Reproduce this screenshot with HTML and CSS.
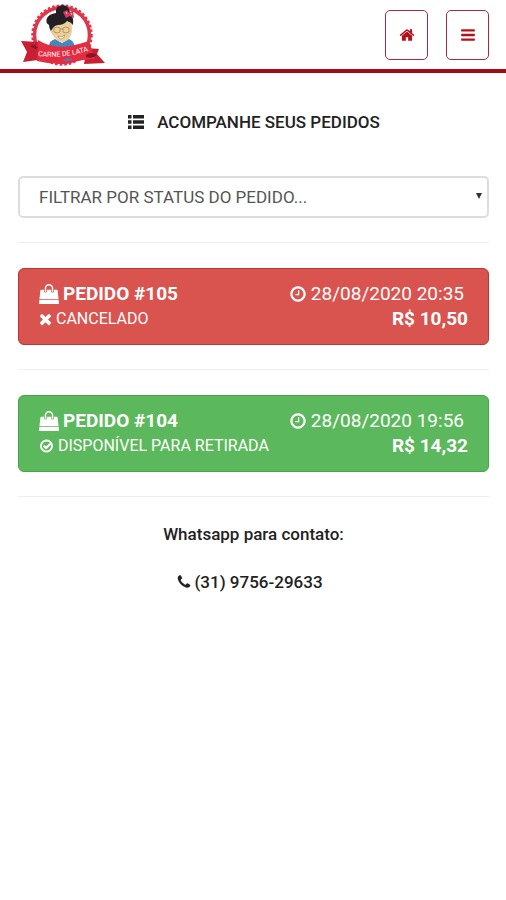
FILE: index.html
```html
<!DOCTYPE html>
<html lang="pt-br">
<head>
    <meta charset="UTF-8">
    <meta name="viewport" content="width=device-width, initial-scale=1.0">
    <title>Acompanhe seus pedidos</title>
    <link rel="stylesheet" href="styles.css">
</head>
<body>

<!-- Ícones -->
<svg class="sprite" width="0" height="0" aria-hidden="true">
    <symbol id="i-sacola" viewBox="0 0 1792 1792">
        <path d="M1757 1408l35 313q3 28-16 50-19 21-48 21H64q-29 0-48-21-19-22-16-50l35-313h1722zM1664 569l86 775H42l86-775q3-24 21-40.500t43-16.500h256v128q0 53 37.500 90.500t90.500 37.500 90.500-37.500 37.500-90.500V512h384v128q0 53 37.500 90.500t90.500 37.500 90.500-37.500 37.500-90.500V512h256q25 0 43 16.500t21 40.500zM1280 384v256q0 26-19 45t-45 19-45-19-19-45V384q0-106-75-181T896 128 715 203t-75 181v256q0 26-19 45t-45 19-45-19-19-45V384q0-159 112.500-271.500T896 0t271.500 112.500T1280 384z"/>
    </symbol>
    <symbol id="i-relogio" viewBox="0 0 1792 1792">
        <path d="M1024 544v448q0 14-9 23t-23 9H672q-14 0-23-9t-9-23v-64q0-14 9-23t23-9h224V544q0-14 9-23t23-9h64q14 0 23 9t9 23zm416 352q0-148-73-273t-198-198-273-73-273 73-198 198-73 273 73 273 198 198 273 73 273-73 198-198 73-273zm224 0q0 209-103 385.500T1281.500 1561 896 1664t-385.500-103T231 1281.500 128 896t103-385.500T510.500 231 896 128t385.500 103T1561 510.500 1664 896z"/>
    </symbol>
    <symbol id="i-check" viewBox="0 0 1792 1792">
        <path d="M1412 734q0 28-18 46l-91 90-408 408q-19 19-45 19-27 0-46-19L503 977q-18-18-18-46 0-27 18-45l91-91q19-19 45-19t45 19l166 165 363-362q19-19 45-19t45 19l91 90q18 18 18 46zM1440 896q0-148-73-273t-198-198-273-73-273 73-198 198-73 273 73 273 198 198 273 73 273-73 198-198 73-273zm224 0q0 209-103 385.500T1281.500 1561 896 1664t-385.500-103T231 1281.500 128 896t103-385.500T510.500 231 896 128t385.500 103T1561 510.500 1664 896z" fill-rule="evenodd"/>
    </symbol>
    <symbol id="i-fechar" viewBox="200 200 1392 1392">
        <path d="M1490 1322q0 40-28 68l-136 136q-28 28-68 28t-68-28l-294-294-294 294q-28 28-68 28t-68-28l-136-136q-28-28-28-68t28-68l294-294-294-294q-28-28-28-68t28-68l136-136q28-28 68-28t68 28l294 294 294-294q28-28 68-28t68 28l136 136q28 28 28 68t-28 68l-294 294 294 294q28 28 28 68z"/>
    </symbol>
    <symbol id="i-casa" viewBox="0 0 1792 1792">
        <path d="M1472 992v480q0 26-19 45t-45 19h-384v-384H768v384H384q-26 0-45-19t-19-45V992q0-1 .5-3t.5-3l575-474 575 474q1 2 1 6zm223-69l-62 74q-8 9-21 11h-3q-13 0-21-7L896 424l-692 577q-12 8-24 7-13-2-21-11l-62-74q-8-10-7-23.500t11-21.500l719-599q32-26 76-26t76 26l244 204V288q0-14 9-23t23-9h192q14 0 23 9t9 23v408l219 182q10 8 11 21.500t-7 23.500z"/>
    </symbol>
    <symbol id="i-menu" viewBox="0 0 1792 1792">
        <path d="M1664 1344v128q0 26-19 45t-45 19H192q-26 0-45-19t-19-45v-128q0-26 19-45t45-19h1408q26 0 45 19t19 45zm0-512v128q0 26-19 45t-45 19H192q-26 0-45-19t-19-45V832q0-26 19-45t45-19h1408q26 0 45 19t19 45zm0-512v128q0 26-19 45t-45 19H192q-26 0-45-19t-19-45V320q0-26 19-45t45-19h1408q26 0 45 19t19 45z"/>
    </symbol>
    <symbol id="i-lista" viewBox="0 0 18 16">
        <path d="M1 1h3.500v3.500H1zM6 1h11v3.500H6zM1 6.200h3.500v3.500H1zM6 6.200h11v3.500H6zM1 11.400h3.500v3.500H1zM6 11.400h11v3.500H6z"/>
    </symbol>
    <symbol id="i-telefone" viewBox="0 0 1792 1792">
        <path d="M1600 1240q0 27-10 70.500t-21 68.500q-21 50-122 106-94 51-186 51-27 0-53-3.500t-57.500-12.500-47-14.500T1048 1485t-49-18q-98-35-175-83-127-79-264-216T344 904q-48-77-83-175-3-9-18-49t-20.500-55.500-14.500-47-12.500-57.500-3.500-53q0-92 51-186 56-101 106-122 25-11 68.500-21t70.500-10q14 0 21 3 18 6 53 76 11 19 30 54t35 63.500 31 53.500q3 4 17.500 25t21.500 35.500 7 28.500q0 20-28.500 50t-62 55-62 53-28.500 46q0 9 5 22.500t8.500 20.500 14 24 11.500 19q76 137 174 235t235 174q2 1 19 11.500t24 14 20.500 8.500 22.500 5q18 0 46-28.500t53-62 55-62 50-28.500q14 0 28.500 7t35.500 21.500 25 17.500q25 15 53.500 31t63.500 35 54 30q70 35 76 53 3 7 3 21z"/>
    </symbol>
</svg>

<header class="topo">
    <a href="#" class="logo" aria-label="Carne de Lata">
        <svg width="86" height="64" viewBox="0 0 86 64">
            <circle cx="42" cy="31" r="27.500" fill="#fff" stroke="#e0354a" stroke-width="3.500"/>
            <circle cx="42" cy="31" r="29.500" fill="none" stroke="#e0354a" stroke-width="2.500" stroke-dasharray="2.600 2"/>
            <!-- roupa -->
            <path d="M29 42q0-5 6-7l7 4 7-4q5 2 6 8H29z" fill="#4387bd"/>
            <!-- rosto -->
            <path d="M31 17h20q2 8 0 14-3 7-9 7-6-1-10-8-4-4-1-13z" fill="#ecd09c"/>
            <!-- cabelo -->
            <path d="M31 27q-2-3-2-6-4-2-2-7 2-4 9-5-1-7 6-8 7 0 8 8 4 4 3 12-2-3-6-4-3 4-9 4-4 0-7 6z" fill="#231f24"/>
            <!-- óculos e boca -->
            <path d="M34 24q3-2 6 0v4q-3 2-6 0zM43 24q3-2 6 0v4q-3 2-6 0zM40 25h3" fill="none" stroke="#a98a52" stroke-width=".8"/>
            <path d="M38 32q4 2 7-1-1 4-4 4-2 0-3-3z" fill="#fff" stroke="#b5694b" stroke-width=".6"/>
            <!-- laço -->
            <path d="M43 8l4-2 2 3 4-3 1 8-4-2-4 2z" fill="#d6395c"/>
            <path d="M46 8l1 2M51 9l1 2" stroke="#f4b3c0"/>
            <!-- faixa -->
            <path d="M1 37l18 1v16l-1 2-15 2 4-10zM67 44l12 1-2 5 8 9-21 1z" fill="#c81f32"/>
            <path d="M18 36q14 9 33 6 12-3 18-5l6 18q-12 0-24 4-19 2-34-2z" fill="#e42c40"/>
            <path d="M10 42q5-3 8 2l-3 1zM66 51q5-4 11 0-5 4-11 2z" fill="#84142a"/>
            <path id="curva" d="M18 52q25 3 50-5" fill="none"/>
            <text class="logo-texto"><textPath href="#curva">CARNE DE LATA</textPath></text>
            <path d="M42 56q5-3 11-1-5 4-11 1z" fill="#6770ad"/>
        </svg>
    </a>
    <nav class="botoes">
        <button type="button" class="btn-topo" aria-label="Início"><svg class="icone"><use href="#i-casa"/></svg></button>
        <button type="button" class="btn-topo" aria-label="Menu"><svg class="icone"><use href="#i-menu"/></svg></button>
    </nav>
</header>

<main class="container">
    <h1><svg class="icone icone-lista"><use href="#i-lista"/></svg>ACOMPANHE SEUS PEDIDOS</h1>

    <!-- Filtro -->
    <div class="filtro">
        <select id="status" name="status" aria-label="Filtrar por status do pedido">
            <option value="" selected>FILTRAR POR STATUS DO PEDIDO...</option>
            <option value="disponivel">DISPONÍVEL PARA RETIRADA</option>
            <option value="cancelado">CANCELADO</option>
        </select>
    </div>
    <hr>

    <!-- Pedidos -->
    <button type="button" class="pedido cancelado">
        <span class="linha">
            <strong><svg class="icone icone-sacola"><use href="#i-sacola"/></svg>PEDIDO #105</strong>
            <span class="data"><svg class="icone icone-relogio"><use href="#i-relogio"/></svg>28/08/2020 20:35</span>
        </span>
        <span class="linha">
            <span class="status"><svg class="icone icone-x"><use href="#i-fechar"/></svg>CANCELADO</span>
            <strong>R$ 10,50</strong>
        </span>
    </button>
    <hr>

    <button type="button" class="pedido disponivel">
        <span class="linha">
            <strong><svg class="icone icone-sacola"><use href="#i-sacola"/></svg>PEDIDO #104</strong>
            <span class="data"><svg class="icone icone-relogio"><use href="#i-relogio"/></svg>28/08/2020 19:56</span>
        </span>
        <span class="linha">
            <span class="status"><svg class="icone icone-check"><use href="#i-check"/></svg>DISPONÍVEL PARA RETIRADA</span>
            <strong>R$ 14,32</strong>
        </span>
    </button>
    <hr>

    <!-- Contato -->
    <div class="contato">
        <p>Whatsapp para contato:</p>
        <a href="tel:+5531975629633"><svg class="icone"><use href="#i-telefone"/></svg>(31) 9756-29633</a>
    </div>
</main>

</body>
</html>
```
FILE: styles.css
```css
* {
    box-sizing: border-box;
}
body {
    margin: 0;
    font-family: Roboto, "Liberation Sans", sans-serif;
    font-size: 17px;
    line-height: 24px;
    color: #222;
    background-color: #fff;
}
.sprite {
    position: absolute;
}
.icone {
    width: 16px;
    height: 16px;
    fill: currentColor;
    flex-shrink: 0;
}
.topo {
    display: flex;
    justify-content: space-between;
    align-items: flex-start;
    padding: 4px 17px 1px 20px;
    border-bottom: 4px solid #a30d12;
}
.logo svg {
    display: block;
}
.logo-texto {
    font-size: 7px;
    fill: #fff;
}
.botoes {
    display: flex;
    gap: 18px;
    padding-top: 6px;
}
.btn-topo {
    display: flex;
    align-items: center;
    justify-content: center;
    width: 43px;
    height: 50px;
    padding: 0;
    background-color: #fff;
    border: 1px solid #a02c40;
    border-radius: 5px;
    color: #b3121a;
    cursor: pointer;
}
.container {
    padding: 37px 17px 0 18px;
}
h1 {
    display: flex;
    align-items: center;
    justify-content: center;
    gap: 12px;
    margin: 0 0 42px;
    font-size: 17px;
    font-weight: 500;
}
.icone-lista {
    width: 18px;
}
.filtro {
    position: relative;
}
.filtro::after {
    content: "";
    position: absolute;
    right: 7px;
    top: 17px;
    border: 3px solid transparent;
    border-top: 6px solid #333;
    pointer-events: none;
}
select {
    display: block;
    width: 100%;
    height: 42px;
    padding: 0 19px;
    appearance: none;
    background-color: #fff;
    border: 2px solid #ddd;
    border-radius: 5px;
    font-family: inherit;
    font-size: 17px;
    color: #555;
}
hr {
    margin: 24px 0 25px;
    border: 0;
    border-top: 1px solid #eee;
}
.pedido {
    display: block;
    width: 100%;
    padding: 12px 20px 13px;
    border: 1px solid;
    border-radius: 6px;
    font-family: inherit;
    font-size: 19px;
    line-height: 25px;
    color: #fff;
    cursor: pointer;
}
.cancelado {
    background-color: #d9534f;
    border-color: #b93632;
}
.disponivel {
    background-color: #5cb85c;
    border-color: #47a447;
}
.linha, .linha strong, .data, .status {
    display: flex;
    align-items: center;
}
.linha {
    justify-content: space-between;
}
.data {
    gap: 4px;
    padding-right: 4px;
}
.status {
    gap: 4px;
    font-size: 16px;
}
.icone-sacola {
    width: 20px;
    height: 20px;
    margin-right: 4px;
}
.icone-relogio {
    width: 18px;
    height: 18px;
}
.icone-x {
    width: 13px;
}
.icone-check {
    width: 15px;
}
.contato {
    text-align: center;
    font-weight: 500;
}
.contato p {
    margin: 0 0 24px;
}
.contato a {
    display: inline-flex;
    align-items: center;
    gap: 2px;
    padding-right: 8px;
    color: inherit;
    text-decoration: none;
}
```
